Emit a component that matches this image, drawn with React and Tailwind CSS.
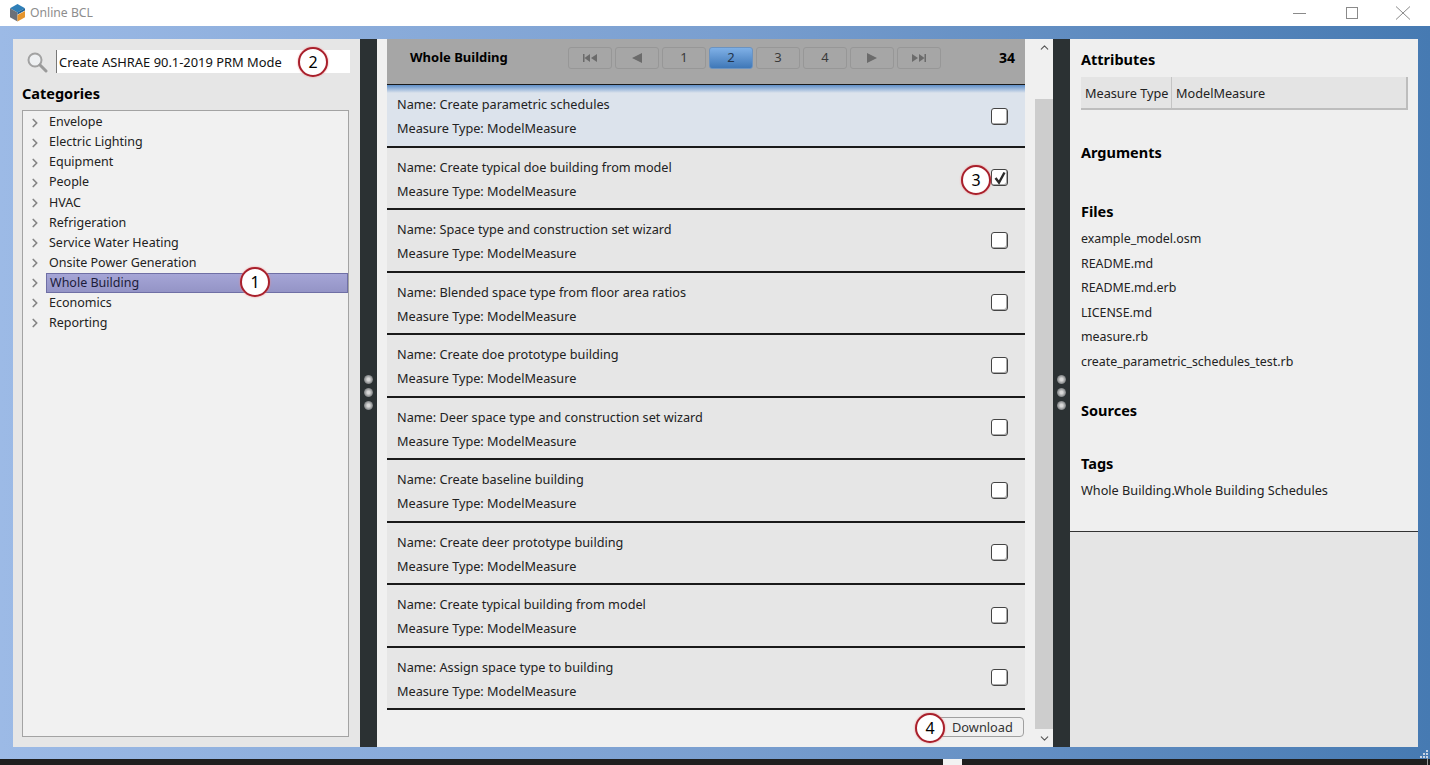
import React from 'react';
import { ChevronRight, ChevronUp, ChevronDown } from 'lucide-react';

const categories = ['Envelope', 'Electric Lighting', 'Equipment', 'People', 'HVAC', 'Refrigeration', 'Service Water Heating', 'Onsite Power Generation', 'Whole Building', 'Economics', 'Reporting'];
const measures = ['Create parametric schedules', 'Create typical doe building from model', 'Space type and construction set wizard', 'Blended space type from floor area ratios', 'Create doe prototype building', 'Deer space type and construction set wizard', 'Create baseline building', 'Create deer prototype building', 'Create typical building from model', 'Assign space type to building'];
const files = ['example_model.osm', 'README.md', 'README.md.erb', 'LICENSE.md', 'measure.rb', 'create_parametric_schedules_test.rb'];

function Callout({ n, className }) {
  return (
    <div className={`absolute w-[30px] h-[30px] rounded-full bg-white border-2 border-[#a8202c] flex items-center justify-center text-[16px] text-black shadow-[0_0_2px_#e88] ${className}`}>
      {n}
    </div>
  );
}

function Logo() {
  return (
    <svg width="17" height="18" viewBox="0 0 17 18" className="shrink-0">
      <path d="M8.5 0 L16 4.3 L8.5 8.6 L1 4.3 Z" fill="#2f7fb8" />
      <path d="M1 4.3 L8.5 8.6 L8.5 17.5 L1 13.2 Z" fill="#6b7078" />
      <path d="M16 4.3 L8.5 8.6 L8.5 10.5 L16 6.5 Z" fill="#1f5f92" />
      <path d="M16 7 L8.5 11 L8.5 17.5 L16 13.2 Z" fill="#e5952f" />
    </svg>
  );
}

function Splitter() {
  return (
    <div className="w-[17px] shrink-0 bg-[#2b3133] flex flex-col items-center justify-center gap-[4px] pb-[2px]">
      {[0, 1, 2].map((i) => (
        <div key={i} className="w-[9px] h-[9px] rounded-full bg-[radial-gradient(circle,#d8d8d8_20%,#85888a_65%,#2b3133_100%)]" />
      ))}
    </div>
  );
}

function PageButton({ active, children }) {
  return (
    <div className={`w-[44px] h-[22px] rounded-[3px] border flex items-center justify-center text-[13px] ${active ? 'border-[#6c93c0] bg-gradient-to-b from-[#7fb0e6] to-[#3f78b8] text-[#23344a]' : 'border-[#979797] text-[#3a3a3a]'}`}>
      {children}
    </div>
  );
}

function PageArrow({ d }) {
  return (
    <svg width="18" height="10" viewBox="0 0 18 10">
      <path d={d} fill="#6b6b6b" />
    </svg>
  );
}

function MeasureRow({ name, first, checked }) {
  return (
    <div className={`shrink-0 border-b-2 border-[#1a1a1a] flex items-center justify-between pl-[10px] pr-[17px] ${first ? 'h-[54.5px] pb-[6px] bg-[#dce3ec]' : 'h-[62.5px] bg-[#e6e6e6]'}`}>
      <div className={`flex flex-col gap-[6px] leading-[18px] ${first ? '' : 'pt-[2px]'}`}>
        <div>Name: {name}</div>
        <div>Measure Type: ModelMeasure</div>
      </div>
      <div className="relative w-[17px] h-[17px] rounded-[3px] bg-white border border-[#444] shadow-[inset_-1px_-1px_0_#aaa]">
        {checked && (
          <svg width="16" height="16" viewBox="0 0 16 16" className="absolute left-0 top-0">
            <path d="M3.5 8 L7 12.5 L12.5 2.5" fill="none" stroke="#2b2b2b" strokeWidth="2.4" />
          </svg>
        )}
      </div>
    </div>
  );
}

function Heading({ children, className }) {
  return <div className={`text-[14.5px] font-bold text-black leading-[20px] ${className}`}>{children}</div>;
}

export default function App() {
  return (
    <div className="relative w-[1430px] h-[765px] flex flex-col overflow-hidden text-[12.7px] text-[#222] font-['Noto_Sans','Open_Sans',sans-serif]">
      {/* title bar */}
      <div className="h-[26px] shrink-0 bg-white flex items-center pl-[9px] pr-[19px]">
        <Logo />
        <span className="ml-[4px] text-[#8d8d8d] text-[12.2px]">Online BCL</span>
        <div className="ml-auto flex items-center">
          <div className="w-[13px] h-px bg-[#8a8a8a]" />
          <div className="ml-[40px] w-[12px] h-[12px] border border-[#8a8a8a]" />
          <svg width="16" height="14" viewBox="0 0 16 14" className="ml-[37px]"><path d="M1 0.5 L15 13.5 M15 0.5 L1 13.5" stroke="#8a8a8a" strokeWidth="1" /></svg>
        </div>
      </div>

      {/* main window area */}
      <div className="flex-1 min-h-0 bg-gradient-to-r from-[#9cbae6] via-[#7a9fd0] to-[#467ab2] pt-[13px] pl-[13px] pr-[12px] pb-[12px] flex">
        {/* categories */}
        <div className="w-[347px] shrink-0 bg-[#e6e6e6] flex flex-col pl-[9px] pr-[11px] pb-[10px]">
          <div className="flex items-center h-[23px] mt-[11px]">
            <svg width="22" height="22" viewBox="0 0 22 22" className="ml-[4px] shrink-0">
              <circle cx="9" cy="9" r="6.5" fill="#eef0f2" stroke="#a2a2a2" strokeWidth="2" />
              <path d="M14 14 L20 20" stroke="#9a9a9a" strokeWidth="3" strokeLinecap="round" />
            </svg>
            <div className="ml-[8px] flex-1 -mr-[1px] h-[23px] bg-white border-l border-[#777] pl-[2px] leading-[24px] text-[12.9px] text-[#111] whitespace-nowrap">Create ASHRAE 90.1-2019 PRM Mode</div>
          </div>
          <div className="text-[14.5px] font-bold text-black leading-[20px] mt-[10px] mb-[7px]">Categories</div>
          <div className="flex-1 min-h-0 bg-[#f1f1f1] border border-[#a3a3a3] pt-[1.5px] text-[12.5px]">
            {categories.map((c) => (
              <div key={c} className="h-[20.1px] flex items-center">
                <ChevronRight size={14} strokeWidth={3} className="text-[#858585] ml-[5px] shrink-0" />
                {c === 'Whole Building' ? (
                  <div className="ml-[4px] flex-1 h-[20px] pl-[3px] leading-[18px] border border-[#6f6fa5] bg-gradient-to-b from-[#a5a5d6] to-[#9494c6] text-[#1c1c3a]">{c}</div>
                ) : (
                  <span className="ml-[7px]">{c}</span>
                )}
              </div>
            ))}
          </div>
        </div>

        <Splitter />

        {/* measures list */}
        <div className="flex-1 min-w-0 bg-[#f0f0f0] flex pl-[10px]">
          <div className="w-[638px] shrink-0 flex flex-col">
            <div className="h-[46px] shrink-0 bg-[#a6a6a6] border-b-[1.5px] border-[#1a1a1a] flex items-center pl-[23px] pr-[10px] pb-[8px]">
              <span className="text-[13px] font-bold text-black w-[158px]">Whole Building</span>
              <div className="flex gap-[3px]">
                <PageButton><PageArrow d="M2 1 H3.5 V9 H2 Z M9 1 V9 L3.5 5 Z M16 1 V9 L10 5 Z" /></PageButton>
                <PageButton><PageArrow d="M14 0 V10 L4 5 Z" /></PageButton>
                <PageButton>1</PageButton>
                <PageButton active>2</PageButton>
                <PageButton>3</PageButton>
                <PageButton>4</PageButton>
                <PageButton><PageArrow d="M4 0 V10 L14 5 Z" /></PageButton>
                <PageButton><PageArrow d="M2 1 V9 L8 5 Z M9 1 V9 L14.5 5 Z M14.5 1 H16 V9 H14.5 Z" /></PageButton>
              </div>
              <span className="ml-auto text-[14px] font-bold text-black">34</span>
            </div>
            <div className="h-[8px] shrink-0 bg-gradient-to-b from-[#5f8fc7] to-[#dce3ec]" />
            {measures.map((m, i) => (
              <MeasureRow key={m} name={m} first={i === 0} checked={i === 1} />
            ))}
            <div className="flex-1 flex justify-end items-start pt-[6.5px] pr-[1px]">
              <div className="w-[89px] h-[20px] rounded-[4px] border border-[#a0a0a0] bg-[#f0f0f0] leading-[18px] text-[12.8px] text-[#333] pl-[16px]">Download</div>
            </div>
          </div>
          <div className="w-[18px] ml-[10px] shrink-0 flex flex-col items-center justify-between">
            <div className="h-[60px] w-full flex justify-center pt-[2px]"><ChevronUp size={13} strokeWidth={2} className="text-[#555]" /></div>
            <div className="flex-1 w-full bg-[#cdcdcd]" />
            <div className="h-[18px] w-full flex justify-center items-center"><ChevronDown size={13} strokeWidth={2} className="text-[#555]" /></div>
          </div>
        </div>

        <Splitter />

        {/* details */}
        <div className="w-[348px] shrink-0 flex flex-col bg-[#e5e5e5]">
          <div className="h-[493px] shrink-0 bg-[#efefef] border-b border-[#333] pl-[11px] pr-[10px] pt-[10px]">
            <Heading>Attributes</Heading>
            <div className="mt-[8px] flex h-[33px] bg-[#e4e4e4] border-b-2 border-r-2 border-[#bdbdbd] leading-[32px]">
              <div className="w-[91px] pl-[4px] border-r border-[#c4c4c4]">Measure Type</div>
              <div className="pl-[4px]">ModelMeasure</div>
            </div>
            <Heading className="mt-[32px]">Arguments</Heading>
            <Heading className="mt-[39px]">Files</Heading>
            <div className="mt-[6px] text-[12.4px]">
              {files.map((f) => <div key={f} className="h-[24.6px] leading-[24.6px]">{f}</div>)}
            </div>
            <Heading className="mt-[25px]">Sources</Heading>
            <Heading className="mt-[33px]">Tags</Heading>
            <div className="mt-[7px] leading-[20px]">Whole Building.Whole Building Schedules</div>
          </div>
        </div>
      </div>

      {/* desktop strip below the window */}
      <div className="h-[6px] shrink-0 bg-[#1f1f1f] pl-[943px]">
        <div className="w-[19px] h-full bg-[#f2f2f2]" />
      </div>

      {/* resize grip */}
      <svg width="10" height="16" viewBox="0 0 10 16" className="absolute right-0 bottom-0">
        <path d="M6 1h2v2H6z M3 4h2v2H3z M6 4h2v2H6z M0 7h2v2H0z M3 7h2v2H3z M6 7h2v2H6z" fill="#c8d4e4" />
        <path d="M7 9h1v7H7z" fill="#9a9a9a" />
      </svg>

      <Callout n={1} className="left-[240px] top-[267px]" />
      <Callout n={2} className="left-[298px] top-[47px]" />
      <Callout n={3} className="left-[961px] top-[165px]" />
      <Callout n={4} className="left-[915px] top-[713px]" />
    </div>
  );
}
